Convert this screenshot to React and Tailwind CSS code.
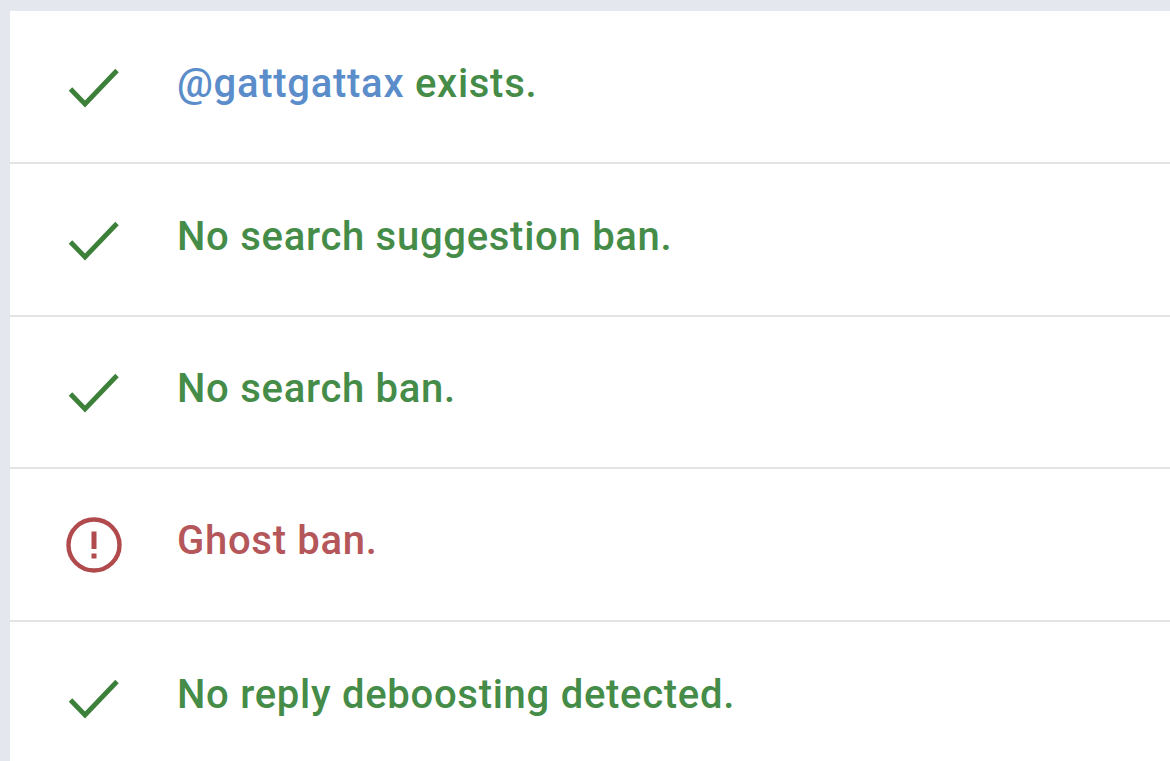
const Check = () => (
  <svg width="56" height="56" viewBox="0 0 56 56" fill="none" className="shrink-0">
    <path d="M4.5 29 L19 44 L51 10.5" stroke="#3c8039" strokeWidth="4.8" strokeLinejoin="miter" />
  </svg>
);

const Alert = () => (
  <svg width="56" height="56" viewBox="0 0 56 56" fill="none" className="shrink-0">
    <circle cx="28" cy="28" r="25.5" stroke="#b04a4d" strokeWidth="4.4" />
    <path d="M28 14.5 V32" stroke="#b04a4d" strokeWidth="5" />
    <path d="M28 36.5 V41.5" stroke="#b04a4d" strokeWidth="5" />
  </svg>
);

const rows = [
  { icon: "check", handle: "@gattgattax", text: " exists." },
  { icon: "check", text: "No search suggestion ban." },
  { icon: "check", text: "No search ban." },
  { icon: "alert", text: "Ghost ban." },
  { icon: "check", text: "No reply deboosting detected." },
];

export default function App() {
  return (
    <div className="h-[761px] w-[1170px] overflow-hidden bg-[#e4e8ee] pt-[11px] pl-[10px]">
      <div className="h-[750px] bg-white pt-[1px] font-['Roboto',sans-serif] text-[40px] leading-[48px] font-medium tracking-[0.72px]">
        {rows.map((r, i) => (
          <div
            key={i}
            className={`flex h-[152.4px] items-center pl-[56px] ${i < 4 ? "border-b-2 border-[#e2e4e6]" : ""}`}
          >
            <div className="flex w-[111px] pt-[2px]">
              {r.icon === "check" ? <Check /> : <Alert />}
            </div>
            <div className={`pb-[6px] whitespace-pre ${r.icon === "alert" ? "text-[#b5565a]" : "text-[#458c48]"}`}>
              {r.handle && <span className="text-[#5b8dca]">{r.handle}</span>}
              {r.text}
            </div>
          </div>
        ))}
      </div>
    </div>
  );
}
